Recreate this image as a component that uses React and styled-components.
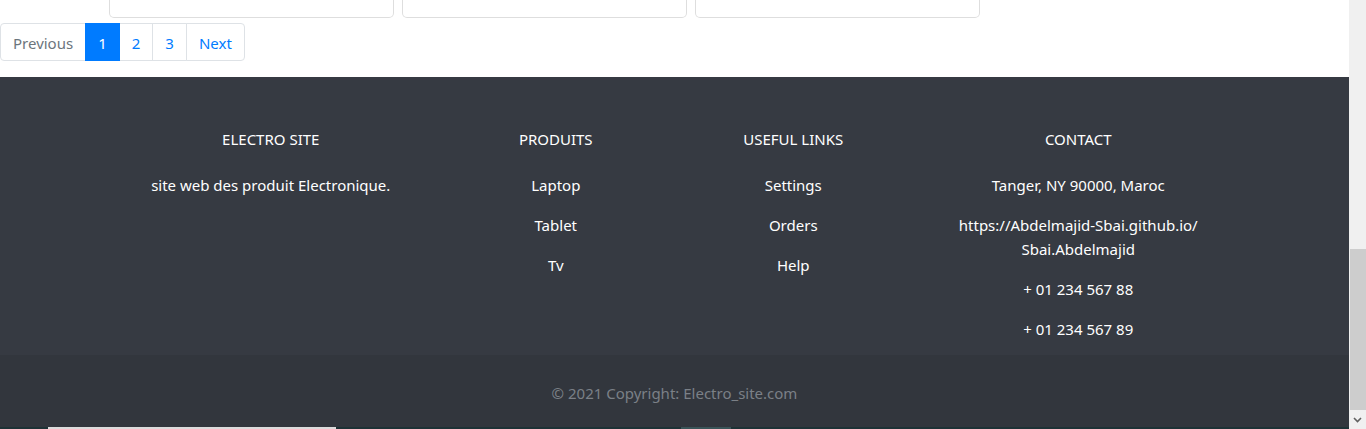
import React from "react";
import styled, { createGlobalStyle } from "styled-components";

const Global = createGlobalStyle`
  html, body { margin: 0; padding: 0; overflow: hidden; }
  body { font-family: "Noto Sans", "Open Sans", sans-serif; font-size: 15px; background: #fff; }
  * { box-sizing: border-box; }
`;

const Frame = styled.div`
  display: flex;
  width: 1366px;
  height: 429px;
  overflow: hidden;
`;

const Page = styled.div`
  width: 1349px;
  display: flex;
  flex-direction: column;
`;

const Top = styled.div`
  height: 77px;
  background: #fff;
  display: flex;
  flex-direction: column;
  gap: 5px;
`;

const CardRow = styled.div`
  display: flex;
  gap: 8px;
  padding-left: 109px;
`;

const Card = styled.div`
  width: 285px;
  height: 18px;
  border: 1px solid rgba(0, 0, 0, 0.13);
  border-top: none;
  border-radius: 0 0 5px 5px;
`;

const Pager = styled.ul`
  display: flex;
  list-style: none;
  margin: 0;
  padding: 0;
`;

const PageItem = styled.li`
  height: 38px;
  padding: 2px 12px 0;
  display: flex;
  align-items: center;
  font-size: 15px;
  line-height: 20px;
  border: 1px solid #dee2e6;
  margin-left: -1px;
  color: ${(p) => (p.$active ? "#fff" : p.$disabled ? "#6c757d" : "#007bff")};
  background: ${(p) => (p.$active ? "#007bff" : "#fff")};
  border-color: ${(p) => (p.$active ? "#007bff" : "#dee2e6")};
  position: ${(p) => (p.$active ? "relative" : "static")};
  z-index: ${(p) => (p.$active ? 1 : 0)};
  &:first-child { margin-left: 0; border-radius: 4px 0 0 4px; }
  &:last-child { border-radius: 0 4px 4px 0; }
`;

const Footer = styled.footer`
  background: #363a42;
  color: #fff;
`;

const Section = styled.div`
  height: 278px;
  padding-top: 53px;
  display: flex;
  justify-content: center;
`;

const Row = styled.div`
  width: 1140px;
  display: flex;
  justify-content: space-around;
`;

const Col = styled.div`
  width: ${(p) => p.$w}px;
  padding: 0 15px;
  text-align: center;
`;

const Heading = styled.h6`
  margin: 0 0 24px;
  font-size: 15px;
  font-weight: 400;
  line-height: 19px;
  text-transform: uppercase;
`;

const Line = styled.p`
  margin: 0 0 16px;
  font-size: 15px;
  line-height: 24px;
`;

const Copy = styled.div`
  height: 72px;
  background: #32363d;
  color: #7b8087;
  font-size: 15px;
  line-height: 24px;
  display: flex;
  align-items: center;
  justify-content: center;
  padding-top: 4px;
`;

const Strip = styled.div`
  height: 2px;
  background: #1e3236;
  display: flex;
  padding-left: 48px;
  gap: 345px;
`;

const StripSeg = styled.div`
  width: ${(p) => p.$w}px;
  background: ${(p) => p.$c};
`;

const Scrollbar = styled.div`
  width: 17px;
  background: #f0f0f0;
  display: flex;
  flex-direction: column;
  justify-content: flex-end;
`;

const Thumb = styled.div`
  height: 161px;
  margin: 0 0 0 1px;
  background: #cdcdcd;
`;

const Arrow = styled.div`
  height: 19px;
  display: flex;
  align-items: center;
  justify-content: center;
  background: #f0f0f0;
`;

export default function App() {
  return (
    <Frame>
      <Global />
      <Page>
        <Top>
          <CardRow>
            <Card />
            <Card />
            <Card />
          </CardRow>
          <Pager>
            <PageItem $disabled>Previous</PageItem>
            <PageItem $active>1</PageItem>
            <PageItem>2</PageItem>
            <PageItem>3</PageItem>
            <PageItem>Next</PageItem>
          </Pager>
        </Top>
        <Footer>
          <Section>
            <Row>
              <Col $w={285}>
                <Heading>Electro site</Heading>
                <Line>site web des produit Electronique.</Line>
              </Col>
              <Col $w={190}>
                <Heading>Produits</Heading>
                <Line>Laptop</Line>
                <Line>Tablet</Line>
                <Line>Tv</Line>
              </Col>
              <Col $w={190}>
                <Heading>Useful links</Heading>
                <Line>Settings</Line>
                <Line>Orders</Line>
                <Line>Help</Line>
              </Col>
              <Col $w={285}>
                <Heading>Contact</Heading>
                <Line>Tanger, NY 90000, Maroc</Line>
                <Line>https://Abdelmajid-Sbai.github.io/ Sbai.Abdelmajid</Line>
                <Line>+ 01 234 567 88</Line>
                <Line>+ 01 234 567 89</Line>
              </Col>
            </Row>
          </Section>
          <Copy>© 2021 Copyright: Electro_site.com</Copy>
        </Footer>
        <Strip>
          <StripSeg $w={288} $c="#dcdcdc" />
          <StripSeg $w={50} $c="#3a5458" />
        </Strip>
      </Page>
      <Scrollbar>
        <Thumb />
        <Arrow>
          <svg width="9" height="6" viewBox="0 0 9 6">
            <path d="M1 1 L4.5 4.5 L8 1" stroke="#606060" strokeWidth="1.6" fill="none" />
          </svg>
        </Arrow>
      </Scrollbar>
    </Frame>
  );
}
